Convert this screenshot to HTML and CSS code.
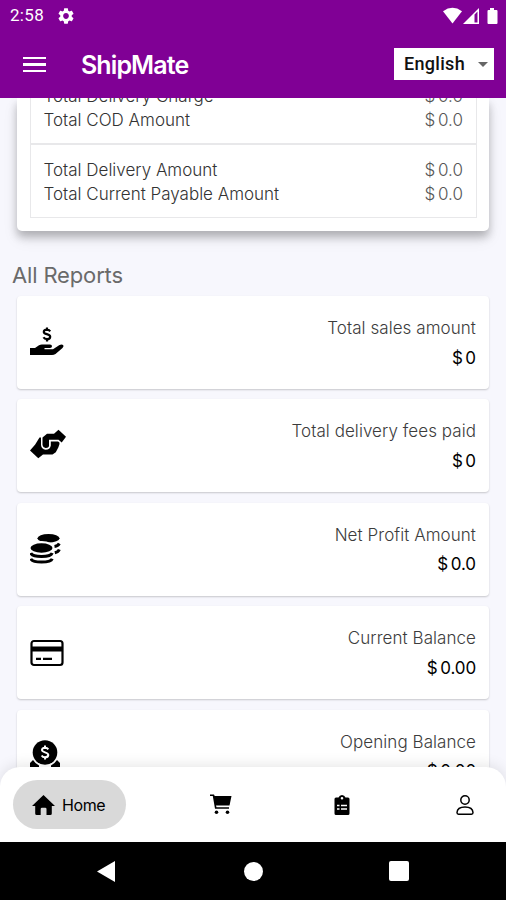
FILE: index.html
```html
<!DOCTYPE html>
<html lang="en">
<head>
<meta charset="utf-8">
<title>ShipMate</title>
<link rel="stylesheet" href="styles.css">
</head>
<body>
<div class="screen">
  <header class="header">
    <div class="status">
      <span class="clock">2:58</span>
      <svg class="gear" width="16" height="16" viewBox="2 2 20 20"><path fill="#fff" d="M19.14 12.94c.04-.3.06-.61.06-.94 0-.32-.02-.64-.07-.94l2.03-1.58c.18-.14.23-.41.12-.61l-1.92-3.32c-.12-.22-.37-.29-.59-.22l-2.39.96c-.5-.38-1.03-.7-1.62-.94l-.36-2.54c-.04-.24-.24-.41-.48-.41h-3.84c-.24 0-.43.17-.47.41l-.36 2.54c-.59.24-1.13.57-1.62.94l-2.39-.96c-.22-.08-.47 0-.59.22L2.74 8.87c-.12.21-.08.47.12.61l2.03 1.58c-.05.3-.09.63-.09.94s.02.64.07.94l-2.03 1.58c-.18.14-.23.41-.12.61l1.92 3.32c.12.22.37.29.59.22l2.39-.96c.5.38 1.03.7 1.62.94l.36 2.54c.05.24.24.41.48.41h3.84c.24 0 .44-.17.47-.41l.36-2.54c.59-.24 1.13-.56 1.62-.94l2.39.96c.22.08.47 0 .59-.22l1.92-3.32c.12-.22.07-.47-.12-.61l-2.01-1.58zM12 15.6c-1.98 0-3.6-1.62-3.6-3.6s1.62-3.6 3.6-3.6 3.6 1.62 3.6 3.6-1.62 3.6-3.6 3.6z"/></svg>
      <svg class="signals" width="56" height="18" viewBox="0 0 56 18" fill="#fff">
        <path d="M0 4.2Q9.5-2.5 19 4.2L9.500 16.500Z"/>
        <path fill-rule="evenodd" d="M20 17 36 1V17ZM31.500 7.500V15.500H34.500V4.500Z"/>
        <path d="M47 1h4v2h2.500q1 0 1 1V16q0 1-1 1h-8q-1 0-1-1V4q0-1 1-1H47Z"/>
      </svg>
    </div>
    <div class="appbar">
      <div class="menu"><i></i><i></i><i></i></div>
      <h1 class="brand">ShipMate</h1>
      <div class="language"><span>English</span><i class="caret"></i></div>
    </div>
  </header>

  <main class="content">
    <section class="summary">
      <div class="group group-top">
        <div class="row"><span>Total Delivery Charge</span><span class="num">$ 0.0</span></div>
        <div class="row"><span>Total COD Amount</span><span class="num">$ 0.0</span></div>
      </div>
      <div class="group">
        <div class="row"><span>Total Delivery Amount</span><span class="num">$ 0.0</span></div>
        <div class="row"><span>Total Current Payable Amount</span><span class="num">$ 0.0</span></div>
      </div>
    </section>

    <h2 class="title">All Reports</h2>
    <div class="reports">
      <article class="card">
        <svg width="36" height="36" viewBox="0 0 36 36">
          <path fill="none" stroke="#000" stroke-width="2.200" d="M20.200 6.300Q19 4.600 16.800 4.600 13.800 4.700 13.800 6.900C13.800 9.900 20.200 8.400 20.200 11.800Q20 14.200 17 14.200 14.500 14.100 13.500 12.300M17 2.500V5M17 14V16.500"/>
          <path d="M0 23H5L9 20.200Q10.300 19.500 12 19.500H20Q22 19.700 22 21.300T20 23H14.500V24.200H23L29.500 20Q32 18.700 33.300 20.300 34 21.500 32.500 22.900L25.500 29Q24 30 22 30H0Z"/>
        </svg>
        <div class="info"><span>Total sales amount</span><b>$ 0</b></div>
      </article>
      <article class="card">
        <svg width="38" height="36" viewBox="0 0 38 36">
          <path d="M12.500 9.500 17 5.800H24L28.500 1.800 36 8.700 31.700 14.500 28.500 11.800H19V18.200Q18.500 20.200 15.500 20Q12.800 19.500 12.500 17Z"/>
          <path d="M9.500 9.500H11V17Q11.500 21.300 15.500 21.700 20.200 21.700 20.800 17.500V13.500H28Q30 14 29.500 16L28.300 19.500 25.800 24.200 22.500 26.500H13L8.300 30.200 0 22.500 5.200 16.500Z"/>
        </svg>
        <div class="info"><span>Total delivery fees paid</span><b>$ 0</b></div>
      </article>
      <article class="card">
        <svg width="36" height="36" viewBox="0 0 36 36">
          <ellipse cx="18.500" cy="7.300" rx="11" ry="4.300"/>
          <ellipse cx="11.500" cy="17" rx="13" ry="7" fill="#fff"/>
          <ellipse cx="11.500" cy="17" rx="11" ry="4.700"/>
          <g fill="none" stroke="#000" stroke-width="3"><path d="M.8 22Q2 25.500 11.500 25.500T22.200 22M.8 27.700Q2 31 11.500 31T22.200 27.700M24.500 15.500Q28 15 29.300 12.500M24.800 21.800Q28.300 21 29.300 18.500"/></g>
        </svg>
        <div class="info"><span>Net Profit Amount</span><b>$ 0.0</b></div>
      </article>
      <article class="card">
        <svg width="36" height="36" viewBox="0 0 36 36">
          <rect x="1.500" y="6" width="31" height="24" rx="2.500" fill="none" stroke="#000" stroke-width="2.200"/>
          <path d="M1 11.500H33V16.500H1ZM6 22.700H11V25.100H6ZM13 22.700H22V25.100H13Z"/>
        </svg>
        <div class="info"><span>Current Balance</span><b>$ 0.00</b></div>
      </article>
      <article class="card">
        <svg width="36" height="36" viewBox="0 0 36 36">
          <circle cx="15" cy="14.500" r="12.300"/>
          <path fill="none" stroke="#fff" stroke-width="2" d="M18.300 11.400Q17.300 9.800 15 9.800 12 9.900 12 12.100C12 14.900 18.300 13.800 18.300 17Q18 19.300 15 19.300 12.600 19.200 11.700 17.500M15 7.500V10M15 19V21.500"/>
          <path d="M0 28V25L3 22 5.500 25 9 27.500V32H0ZM30 28V25L27 22 24.500 25 21 27.500V32H30Z"/>
        </svg>
        <div class="info"><span>Opening Balance</span><b>$ 0.00</b></div>
      </article>
    </div>
  </main>

  <nav class="tabs">
    <div class="tab tab-active">
      <svg width="23" height="20" viewBox="0 0 23 20"><path d="M11.500 0 23 11H19.800V18.500Q19.800 20 18.300 20H14.500V14Q14.500 12.700 13.200 12.700H10Q8.700 12.700 8.700 14V20H4.700Q3.200 20 3.200 18.500V11H0Z"/></svg>
      <span>Home</span>
    </div>
    <svg class="tab-cart" width="22" height="21" viewBox="0 0 22 21"><path d="M0 .5H4L4.700 2H21.500L19.500 11.500H6L6.500 13.300H19V14.800H5L2.800 2H0Z"/><circle cx="6.500" cy="18.300" r="1.800"/><circle cx="17.500" cy="18.300" r="1.800"/></svg>
    <svg class="tab-list" width="16" height="20" viewBox="0 0 16 20"><path fill-rule="evenodd" d="M2 2.500H4.500Q5.500 0 8 0T11.500 2.500H14Q15.500 2.500 15.500 4V18.500Q15.500 20 14 20H2Q.5 20 .5 18.500V4Q.5 2.500 2 2.500ZM8 2A1.300 1.300 0 1 0 8 4.600 1.300 1.300 0 1 0 8 2Z"/><path stroke="#fff" stroke-width="1.500" d="M3 10.500H5.500M7 10.500H13M3 14H5.500M7 14H13"/></svg>
    <svg class="tab-user" width="18" height="20" viewBox="0 0 18 20" fill="none" stroke="#000" stroke-width="1.500"><circle cx="9" cy="5" r="4.200"/><path d="M1 17.500Q1.300 12 9 12T17 17.500Q17 19.200 15.500 19.200H2.500Q1 19.200 1 17.500Z"/></svg>
  </nav>

  <footer class="sysnav">
    <svg width="18" height="21" viewBox="0 0 18 21"><path fill="#fff" d="M18 0V21L0 10.500Z"/></svg>
    <i class="sys-home"></i>
    <i class="sys-recent"></i>
  </footer>
</div>
</body>
</html>
```
FILE: styles.css
```css
* { box-sizing: border-box; }
body { margin: 0; font-family: Inter, "Liberation Sans", sans-serif; }
svg { display: block; flex: none; }

.screen {
  display: flex;
  flex-direction: column;
  width: 506px;
  height: 900px;
  overflow: hidden;
  background: #f7f7fd;
}

.header { flex: none; height: 98px; background: #800095; color: #fff; z-index: 1; }
.status { display: flex; align-items: center; height: 31px; padding: 0 7px 0 10px; }
.clock { width: 48px; font: 400 17px/31px Roboto, sans-serif; letter-spacing: .3px; }
.signals { margin-left: auto; }
.appbar { display: flex; align-items: center; height: 67px; padding: 0 12px 0 23px; }
.menu { display: flex; flex-direction: column; gap: 4px; width: 23px; }
.menu i { height: 2.500px; background: #fff; }
.brand { margin: 0 0 0 35px; font-size: 25px; line-height: 32px; font-weight: 600; letter-spacing: -.9px; }
.language {
  display: flex;
  align-items: center;
  justify-content: space-between;
  width: 100px;
  height: 32px;
  margin: -1px 0 0 auto;
  padding: 0 6px 0 10px;
  background: #fff;
  color: #111;
  font: 500 18px/32px Roboto, sans-serif;
  letter-spacing: .3px;
}
.caret { border: 5px solid transparent; border-top-color: #666; border-bottom: 0; }

.content { flex: 1; min-height: 0; overflow: hidden; }
.summary {
  margin: 0 17px;
  padding: 0 12px 13px 13px;
  background: #fff;
  border-radius: 0 0 5px 5px;
  box-shadow: 0 6px 9px rgba(0, 0, 0, .24), 0 8px 16px rgba(0, 0, 0, .08);
}
.group { padding: 14px 13px 11px 12.500px; border: 1px solid #e8e8ea; border-top: 0; }
.group-top {
  display: flex;
  flex-direction: column;
  justify-content: flex-end;
  height: 47px;
  padding-top: 0;
  border-bottom-width: 2px;
}
.row {
  display: flex;
  flex: none;
  justify-content: space-between;
  height: 23.500px;
  font-size: 17px;
  line-height: 23.500px;
  font-weight: 300;
  letter-spacing: 0;
  color: #333;
}
.num { word-spacing: -2px; color: #555; }

.title {
  margin: 29px 12px 6px;
  font-size: 22px;
  line-height: 30px;
  font-weight: 400;
  letter-spacing: -.15px;
  color: #6a6a6a;
}
.reports { display: flex; flex-direction: column; gap: 10.400px; margin: 0 17px; }
.card {
  display: flex;
  flex: none;
  align-items: center;
  justify-content: space-between;
  height: 93px;
  padding: 0 13px;
  background: #fff;
  border-radius: 4px;
  box-shadow: 0 1px 2px rgba(0, 0, 0, .2);
}
.info {
  display: flex;
  flex-direction: column;
  align-items: flex-end;
  padding-top: 2px;
  font-size: 17px;
  line-height: 29.500px;
  font-weight: 300;
  letter-spacing: .06px;
  color: #3c3c3c;
}
.info b { font-weight: 400; letter-spacing: -.1px; word-spacing: -2px; color: #000; }

.tabs {
  display: flex;
  flex: none;
  align-items: center;
  height: 75px;
  margin-top: -20px;
  padding: 0 32px 0 13px;
  background: #fff;
  border-radius: 20px 20px 0 0;
  box-shadow: 0 -2px 14px rgba(0, 0, 0, .1);
  z-index: 1;
}
.tab { display: flex; flex: none; align-items: center; gap: 7px; height: 49px; padding: 0 20px 0 19px; border-radius: 25px; }
.tab-active { width: 113px; background: #d9d9d9; font-size: 16px; letter-spacing: -.4px; }
.tab-cart { margin-left: 84px; }
.tab-list { margin-left: 102px; }
.tab-user { margin-left: auto; }

.sysnav {
  display: flex;
  flex: none;
  align-items: center;
  justify-content: space-between;
  height: 58px;
  padding: 0 97px;
  background: #000;
  z-index: 1;
}
.sys-home { width: 19px; height: 19px; margin-left: 2px; border-radius: 50%; background: #fff; }
.sys-recent { width: 20px; height: 20px; border-radius: 2px; background: #fff; }
```
